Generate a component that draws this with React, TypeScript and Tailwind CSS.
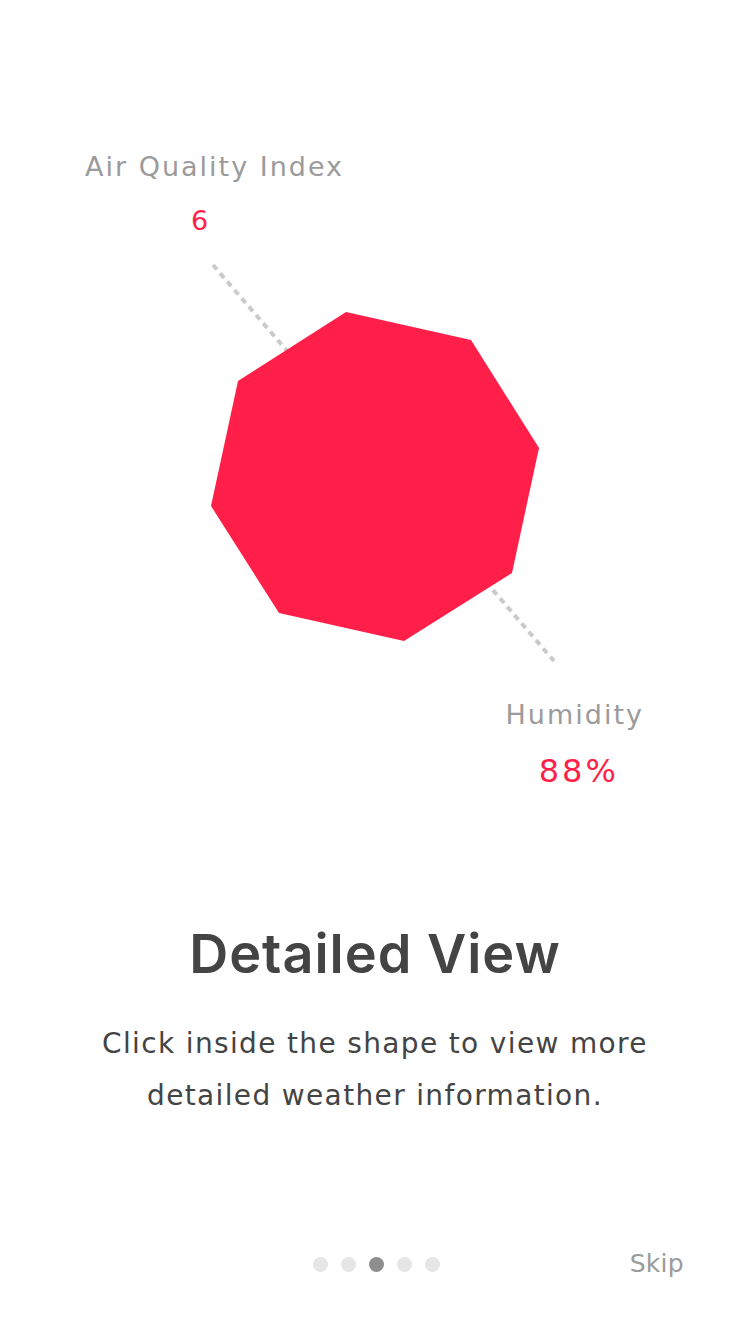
import React from "react";

export default function App() {
  const font = { fontFamily: "'DejaVu Sans', 'Noto Sans', sans-serif" };
  const titleFont = { fontFamily: "Inter, 'Noto Sans', sans-serif" };
  return (
    <div className="w-[750px] h-[1334px] bg-white flex flex-col overflow-hidden" style={font}>
      <div className="pt-[150px] pl-[85px]">
        <div className="text-[27px] leading-[34px] text-[#9b9b9b] tracking-[2px]">Air Quality Index</div>
        <div className="mt-[20px] pl-[106px] text-[27px] leading-[34px] text-[#ff1f48]">6</div>
      </div>
      <svg width="750" height="410" viewBox="0 255 750 410" className="block mt-[17px]">
        <line x1="213" y1="265" x2="554" y2="661" stroke="#cacaca" strokeWidth="4" strokeDasharray="6 5" />
        <polygon
          points="346,312 471,340 539,448 512,573 404,641 279,613 211,506 238,381"
          fill="#ff1f48"
        />
      </svg>
      <div className="self-end mr-[106px] mt-[33px] flex flex-col items-center">
        <div className="text-[27px] leading-[34px] text-[#9b9b9b] tracking-[2px] pl-[2px]">Humidity</div>
        <div className="mt-[20px] text-[32px] leading-[38px] text-[#ff1f48] tracking-[3px] pl-[10px]">88%</div>
      </div>
      <div className="mt-[134px] text-center text-[54px] leading-[60px] font-semibold text-[#444444] tracking-[1px]" style={titleFont}>
        Detailed View
      </div>
      <div className="mt-[34px] text-center text-[28px] leading-[52px] text-[#444444] tracking-[1.35px]">
        Click inside the shape to view more
        <br />
        detailed weather information.
      </div>
      <div className="mt-auto mb-[60px] relative flex items-center justify-center h-[20px]">
        <div className="flex gap-[13px] ml-[2px]">
          <span className="w-[15px] h-[15px] rounded-full bg-[#e6e6e6]" />
          <span className="w-[15px] h-[15px] rounded-full bg-[#e6e6e6]" />
          <span className="w-[15px] h-[15px] rounded-full bg-[#8e8e8e]" />
          <span className="w-[15px] h-[15px] rounded-full bg-[#e6e6e6]" />
          <span className="w-[15px] h-[15px] rounded-full bg-[#e6e6e6]" />
        </div>
        <span className="absolute right-[66px] text-[25px] leading-[30px] text-[#9b9b9b] tracking-[0.3px]">Skip</span>
      </div>
    </div>
  );
}
